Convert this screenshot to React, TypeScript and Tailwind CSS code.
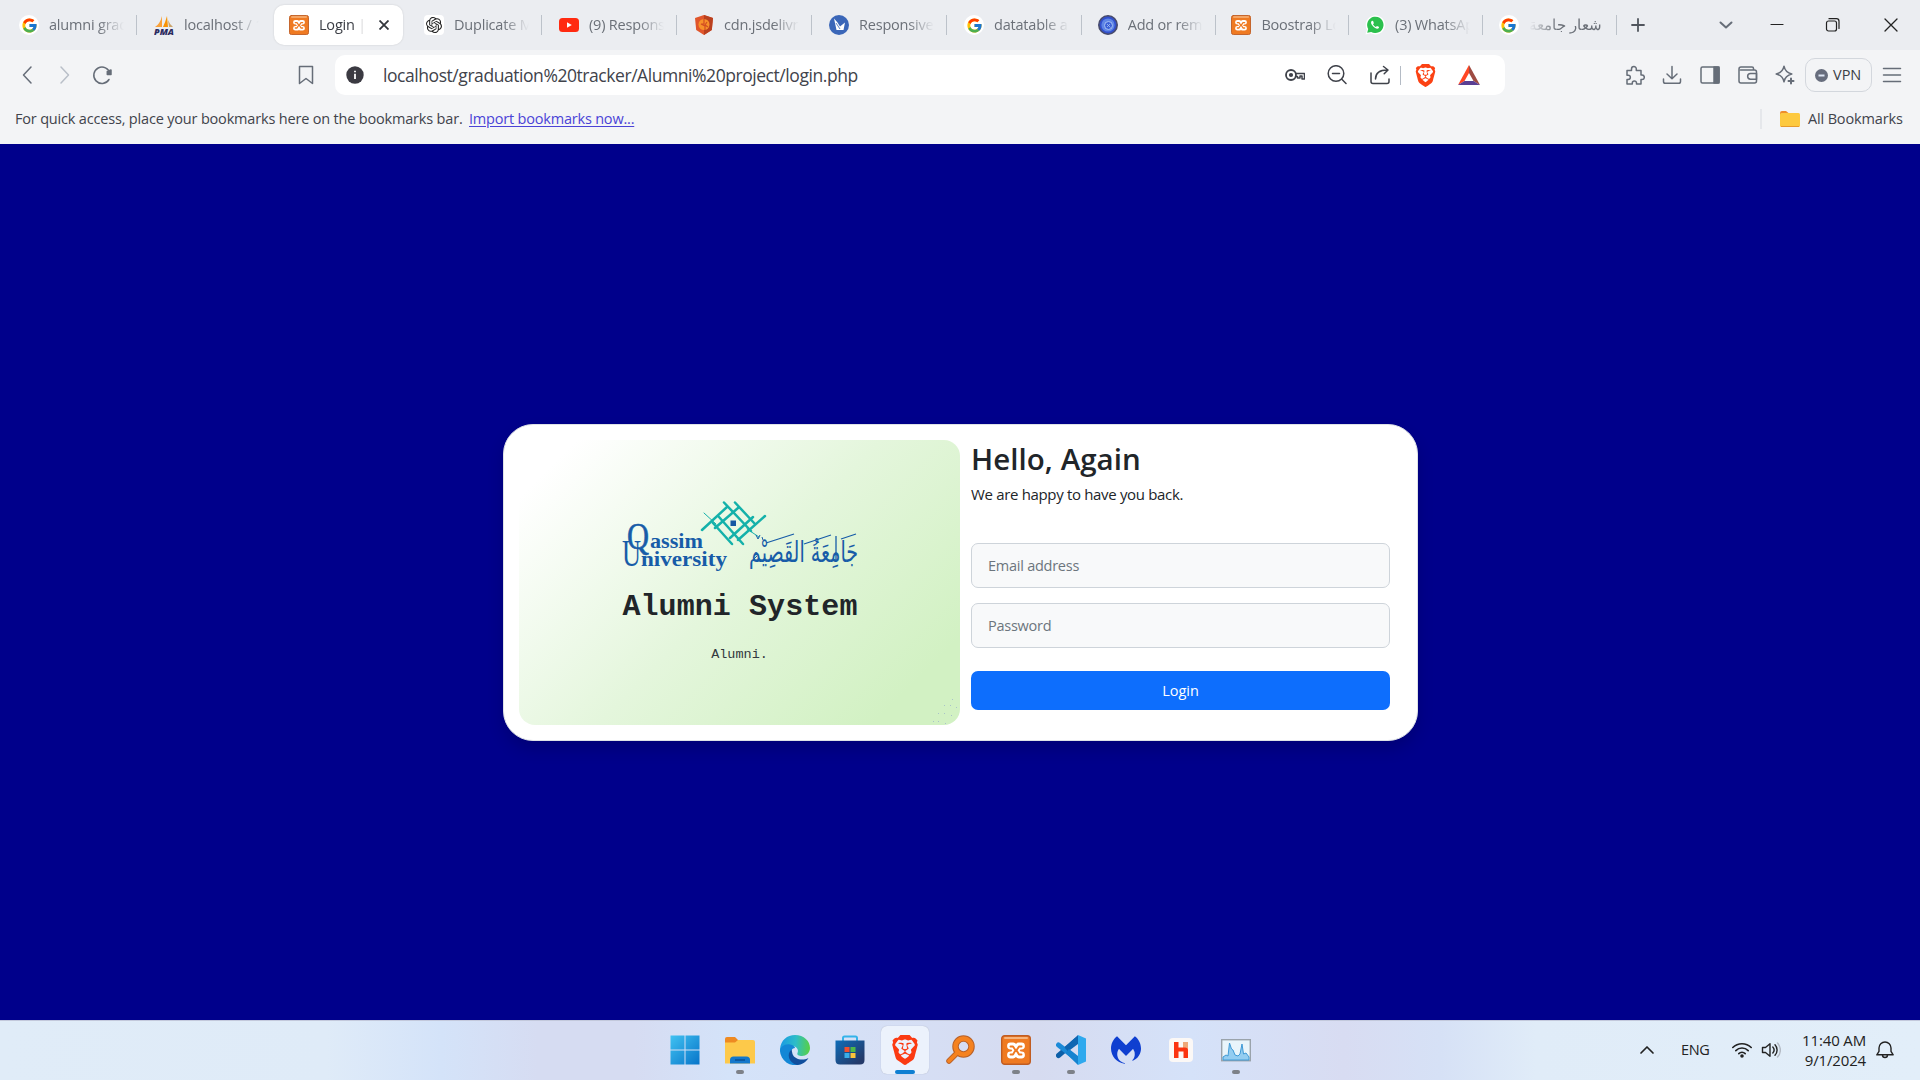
import React from "react";
import { FcGoogle } from "react-icons/fc";
import { SiBrave, SiMalwarebytes, SiOpenai } from "react-icons/si";

const ui = "font-['Open_Sans','Noto_Sans',sans-serif]";

const GoogleIcon = () => (
  <span className="flex size-5 items-center justify-center rounded-full bg-white">
    <FcGoogle className="size-[17px]" />
  </span>
);

const PmaIcon = () => (
  <svg viewBox="0 0 20 20" className="size-5">
    <path d="M8 1 L8 12 L1 12 Q6 9 8 1Z" fill="#f9a13a" />
    <path d="M13 1 L14 12 L9 12 Q11 8 13 1Z" fill="#f89406" />
    <path d="M14 5 Q16 10 19 12 L15 12Z" fill="#c9a46c" />
    <text x="0" y="19.500" fontSize="8" fontWeight="800" fontStyle="italic" fill="#2b2b60" textLength="20" lengthAdjust="spacingAndGlyphs" fontFamily="Open Sans">PMA</text>
  </svg>
);

const XamppIcon = ({ className = "size-5" }: { className?: string }) => (
  <svg viewBox="0 0 30 30" className={className} fill="none" strokeLinecap="round" strokeLinejoin="round">
    <rect x="0.7" y="0.7" width="28.600" height="28.600" rx="3" fill="#ef7a22" stroke="#c05c22" strokeWidth="1.400" />
    <rect x="3" y="2" width="24" height="2" rx="1" fill="#f6b47c" />
    <path d="M9.500 11h2.800l2.700 4-2.700 5H9.500M20.500 11h-2.800L15 15l2.700 5h2.800" stroke="#fff" strokeWidth="6.800" />
    <path d="M9.500 11.500h2.500l2.500 3.800-2.500 4.200H9.500M20.500 11.500H18l-2.500 3.800 2.500 4.200h2.500" stroke="#ef7a22" strokeWidth="1.900" />
  </svg>
);

const YoutubeIcon = () => (
  <svg viewBox="0 0 20 20" className="size-5">
    <rect y="3" width="20" height="14" rx="3.500" fill="#ff2a10" />
    <path d="M8 7.200v5.600l4.800-2.800z" fill="#fff" />
  </svg>
);

const ChatIcon = () => (
  <span className="flex size-5 items-center justify-center rounded bg-white">
    <SiOpenai className="size-4 text-[#222]" />
  </span>
);

const CdnIcon = () => (
  <svg viewBox="0 0 20 20" className="size-5">
    <path d="M10 0l9 3-1.200 12L10 20l-7.800-5L1 3z" fill="#e0552b" />
    <path d="M10 0l9 3-1.200 12L10 20z" fill="#b9401f" />
    <circle cx="10" cy="9.500" r="5.500" fill="#f7912a" />
    <path d="M10 4v5H7l4 2v4M13 7l-2 3 3 2" stroke="#d24d22" fill="none" strokeWidth="1.200" />
  </svg>
);

const ResponsiveIcon = () => (
  <svg viewBox="0 0 20 20" className="size-5">
    <circle cx="10" cy="10" r="10" fill="#3a66b8" />
    <path d="M5 3.500l3.500 4 2.500 4L16 7.500l-1.500 7.500H7.500z" fill="#fff" />
    <path d="M7 8l4 6" stroke="#3a66b8" strokeWidth="0.800" />
  </svg>
);

const GlobeIcon = () => (
  <svg viewBox="0 0 20 20" className="size-5">
    <circle cx="10" cy="10" r="9.200" fill="#3250cc" stroke="#474a6b" strokeWidth="1.600" />
    <circle cx="10" cy="10" r="6.600" fill="#5f86e6" />
    <circle cx="10.500" cy="10.500" r="4" fill="#3c62d8" stroke="#a9c2f4" />
    <path d="M9 9l3.500 3.500M12 9l-3 3" stroke="#a9c2f4" strokeWidth="0.800" />
  </svg>
);

const WhatsIcon = () => (
  <svg viewBox="0 0 20 20" className="size-5">
    <path d="M.5 19.500l1.400-5A9.600 9.600 0 1 1 5.700 18.300z" fill="#fff" />
    <path d="M2.200 17.800l1-3.800A8.200 8.200 0 1 1 6.200 17z" fill="#2bc04d" />
    <path d="M7 5.700c-1.600 1-1.300 3.200 1 5.600s4.700 3.300 6 1.500l-.2-1-1.900-.9-1 1.100c-1.400-.5-2.400-1.500-2.900-2.700l.9-1-.8-2.200z" fill="#fff" />
  </svg>
);

type TabData = { icon: React.ReactNode; title: string; sep: boolean; active?: boolean; wide?: boolean; rtl?: boolean };

const tabs: TabData[] = [
  { icon: <GoogleIcon />, title: "alumni grad", sep: true, wide: true },
  { icon: <PmaIcon />, title: "localhost / 1", sep: false, wide: true },
  { icon: <XamppIcon />, title: "Login | P", sep: false, active: true, wide: true },
  { icon: <ChatIcon />, title: "Duplicate Ma", sep: true, wide: true },
  { icon: <YoutubeIcon />, title: "(9) Responsi", sep: true, wide: true },
  { icon: <CdnIcon />, title: "cdn.jsdelivr.", sep: true, wide: true },
  { icon: <ResponsiveIcon />, title: "Responsive l", sep: true, wide: true },
  { icon: <GoogleIcon />, title: "datatable ar", sep: true },
  { icon: <GlobeIcon />, title: "Add or remo", sep: true },
  { icon: <XamppIcon />, title: "Boostrap Lo", sep: true },
  { icon: <WhatsIcon />, title: "(3) WhatsAp", sep: true },
  { icon: <GoogleIcon />, title: "شعار جامعة", sep: true, rtl: true },
];

const Tab = ({ t }: { t: TabData }) => (
  <div className={`flex h-10 shrink-0 items-center ${t.wide ? "w-[135px]" : "w-[133.700px]"}`}>
    <div className={`flex h-10 w-[129px] shrink-0 items-center rounded-[10px] pl-[15px] ${t.active ? "bg-white shadow-[0_0_2px_rgba(0,0,0,0.15)]" : ""}`}>
      {t.icon}
      <div
        dir={t.rtl ? "rtl" : "ltr"}
        className={`ml-[10px] overflow-hidden whitespace-nowrap text-[14.5px] tracking-[-0.2px] ${
          t.active
            ? "w-[45px] text-[#3b3e45] [mask-image:linear-gradient(to_right,black_80%,transparent)]"
            : t.rtl
              ? "w-[73px] text-[#6b7078] [mask-image:linear-gradient(to_left,black_60%,transparent)]"
              : "w-[75px] text-[#6b7078] [mask-image:linear-gradient(to_right,black_65%,transparent)]"
        }`}
      >
        {t.title}
      </div>
      {t.active && (
        <svg viewBox="0 0 10 10" className="ml-[15px] size-[10px]" stroke="#33363c" strokeWidth="1.800">
          <path d="M.5.5l9 9M9.500.5l-9 9" />
        </svg>
      )}
    </div>
    {t.sep && <div className="ml-[3px] h-5 w-px bg-[#bcc2ca]" />}
  </div>
);

const Ic = ({ children, w = 20, className = "", c = "#666d78", sw = 1.5 }: { children: React.ReactNode; w?: number; className?: string; c?: string; sw?: number }) => (
  <svg viewBox={`0 0 ${w} 20`} width={w} height={20} fill="none" stroke={c} strokeWidth={sw} strokeLinecap="round" strokeLinejoin="round" className={`shrink-0 ${className}`}>
    {children}
  </svg>
);

const TabStrip = () => (
  <div className="flex h-[50px] shrink-0 items-center bg-[#ebedf1] pl-1">
    {tabs.map((t, i) => (
      <Tab key={i} t={t} />
    ))}
    <Ic c="#50555d" sw={1.8} className="ml-[11px]">
      <path d="M10 4v12M4 10h12" />
    </Ic>
    <Ic c="#666d78" sw={2} className="ml-[68px]">
      <path d="M4.500 7.500l5.500 5 5.500-5" />
    </Ic>
    <Ic c="#222" sw={1.2} className="ml-[31px]">
      <path d="M4 9.500h12" />
    </Ic>
    <Ic c="#222" sw={1.2} className="ml-[36px]">
      <rect x="3.500" y="6" width="10" height="10" rx="2" />
      <path d="M6 3.700h7.500q2.500 0 2.500 2.500v7.300" />
    </Ic>
    <Ic c="#222" sw={1.3} className="ml-[38px]">
      <path d="M4 4l12 12M16 4L4 16" />
    </Ic>
  </div>
);

const Toolbar = () => (
  <div className="flex h-[50px] shrink-0 items-center">
    <Ic className="ml-[17px]">
      <path d="M14 2L6.500 10l7.500 8" />
    </Ic>
    <Ic c="#b9bfc8" className="ml-[17px]">
      <path d="M7 2l7.500 8L7 18" />
    </Ic>
    <Ic className="ml-[18px]">
      <path d="M18 8.500A8.200 8.200 0 1 0 17 14.500" />
      <path d="M15.300 6.500l3.700-1.500v4.500h-3.700z" fill="#666d78" />
    </Ic>
    <Ic className="ml-[184px]">
      <path d="M3.500 1.500h13v17L10 13.500l-6.500 5z" strokeWidth="1.500" />
    </Ic>
    <div className="ml-[19px] flex h-10 w-[1170px] items-center rounded-[10px] bg-white">
      <svg viewBox="0 0 18 18" className="ml-[11px] size-[18px]">
        <circle cx="9" cy="9" r="8.700" fill="#3b3a42" />
        <path d="M9 7.700v5.300M9 4.700v1.500" stroke="#fff" strokeWidth="1.800" />
      </svg>
      <div className="ml-[19px] w-[880px] whitespace-nowrap text-[17.5px] tracking-[-0.44px] text-[#41434b]">localhost/graduation%20tracker/Alumni%20project/login.php</div>
      <Ic c="#3f424a" sw={1.8} className="ml-[22px]">
        <circle cx="6" cy="10" r="5" />
        <circle cx="6" cy="10" r="1.200" fill="#3f424a" />
        <path d="M11 8.500h8.500v5.500h-2.500v-3h-2v2h-2.500v-1.500h-2" strokeWidth="1.500" />
      </Ic>
      <Ic c="#3f424a" className="ml-[22px]">
        <circle cx="9" cy="8.500" r="7.800" />
        <path d="M5.500 8.500h7M14.800 14.300l4.200 4.200" />
      </Ic>
      <Ic c="#3f424a" className="ml-[23px]">
        <path d="M1 8v8.500q0 2 2 2h14q2 0 2-2V14" />
        <path d="M5.500 14c0-6 4-9 12-9M13.500 1.500L18 5l-3.800 3.800" />
      </Ic>
      <div className="ml-[10px] h-[19px] w-px bg-[#b4bbc5]" />
      <SiBrave className="ml-[13px] size-[23px] text-[#fb4214]" />
      <svg viewBox="0 0 22 20" className="ml-[21px] h-5 w-[22px]">
        <path d="M11 0L0 20l6.500-4L11 8z" fill="#ff4724" />
        <path d="M11 0l11 20-6.500-4L11 8z" fill="#9e4b42" />
        <path d="M0 20h22l-6.500-4h-9z" fill="#5a3f93" />
      </svg>
    </div>
    <Ic className="ml-[120px]">
      <path d="M2 5.500h4.500V4a2.400 2.400 0 0 1 4.800 0v1.500H16V10h1a2.300 2.300 0 0 1 0 4.600h-1V19h-4.500v-1a2.100 2.100 0 0 0-4.200 0v1H2v-4.500h1.200a2.100 2.100 0 0 0 0-4.300H2z" />
    </Ic>
    <Ic className="ml-[17px]">
      <path d="M10 1.500v12M5 9l5 4.800L15 9M1.500 14v2.500q0 1.800 1.800 1.800h13.400q1.800 0 1.800-1.800V14" />
    </Ic>
    <Ic className="ml-[18px]">
      <rect x="1" y="2" width="18" height="16" rx="1.500" />
      <path d="M14 2h5v16h-5z" fill="#666d78" />
    </Ic>
    <Ic className="ml-[18px]">
      <path d="M15.500 5V3.500Q15.500 2 14 2H3Q1 2 1 4v12q0 2 2 2h13.500q2 0 2-2V7q0-2-2-2H2.500" />
      <path d="M18.500 8.500h-6a2.800 2.800 0 0 0 0 5.700h6z" />
    </Ic>
    <Ic className="ml-[17px]">
      <path d="M9 1.200q1.200 6.300 7.800 7.800-6.600 1.500-7.800 7.800-1.200-6.300-7.800-7.800Q7.800 7.500 9 1.200z" />
      <path d="M16 13.500v5M13.500 16h5" strokeWidth="2" />
    </Ic>
    <div className="ml-[10px] flex h-[34px] w-[67px] items-center rounded-[10px] border border-[#d3d7dd] pl-[9px] text-[14.5px] text-[#3b3e45]">
      <svg viewBox="0 0 13 13" className="mr-[5px] size-[13px] shrink-0">
        <circle cx="6.500" cy="6.500" r="6.500" fill="#676d7d" />
        <path d="M3.500 6.500h6" stroke="#dfe6f5" strokeWidth="2" />
      </svg>
      VPN
    </div>
    <Ic className="ml-[10px]">
      <path d="M1.500 3.500h17M1.500 10h17M1.500 16.500h17" />
    </Ic>
  </div>
);

const Folder = () => (
  <svg viewBox="0 0 20 16" className="h-4 w-5">
    <path d="M0 2Q0 0 2 0h4l2.500 2H18v3H0z" fill="#ee8d2a" />
    <rect y="2" width="20" height="14" rx="1.500" fill="#fdc93f" />
    <path d="M1 15.500h18" stroke="#e79a2c" />
  </svg>
);

const BookmarksBar = () => (
  <div className="flex h-11 shrink-0 items-center whitespace-nowrap pb-[6px] pl-[15px] pr-[17px] text-[14.5px] text-[#41434b]">
    <span className="w-[454px] tracking-[-0.18px]">For quick access, place your bookmarks here on the bookmarks bar.</span>
    <span className="tracking-[-0.2px] text-[#4a43d6] underline underline-offset-2">Import bookmarks now...</span>
    <div className="ml-auto mr-[18px] h-5 w-[2px] bg-[#e5e7eb]" />
    <Folder />
    <span className="ml-2 w-[95px] tracking-[-0.15px]">All Bookmarks</span>
  </div>
);

const UniversityLogo = () => (
  <svg viewBox="0 0 236 72" className="h-[72px] w-[236px]">
    <g stroke="#14b1aa" strokeWidth="2.500" strokeLinecap="round">
      <path d="M80 30l25-23M93 28l23-20M108 38l23-21M116 40l27-24" />
      <path d="M102 2.500l27 28.500M113 2.500l20 21.500M91 23l19 21M97 17l24 27" />
      <path d="M82 13l12 11M125 29l12 8" strokeWidth="1" />
    </g>
    <rect x="108.500" y="20.500" width="5.500" height="5.500" fill="#1557a3" />
    <g fill="#175ca8" fontFamily="Liberation Serif" fontWeight="700">
      <text x="5" y="49" fontSize="38" fontWeight="400" stroke="#175ca8" strokeWidth="0.600" textLength="22" lengthAdjust="spacingAndGlyphs">Q</text>
      <text x="28" y="48" fontSize="21" textLength="53" lengthAdjust="spacingAndGlyphs">assim</text>
      <text x="0" y="66" fontSize="38" fontWeight="400" textLength="19" lengthAdjust="spacingAndGlyphs">U</text>
      <text x="19" y="66" fontSize="21" textLength="86" lengthAdjust="spacingAndGlyphs">niversity</text>
    </g>
    <text x="236" y="62" direction="rtl" fontSize="29" fill="#175ca8" fontFamily="DejaVu Sans" textLength="109" lengthAdjust="spacingAndGlyphs">جَامِعَةُ القَصِيْم</text>
    <path d="M144 43l28-9M182 44l27-9M219 39l15-5M214 36v24" stroke="#175ca8" strokeWidth="1.300" />
    <path d="M134 35l2 4 2-4M140 37l1 3M129 62l6-6" stroke="#175ca8" fill="none" />
  </svg>
);

const dots = [
  [20, 2], [12, 8], [18, 8], [24, 10], [6, 16], [12, 16], [19, 18], [1, 24], [6, 24], [13, 26],
];

const LoginCard = () => (
  <div className="flex h-[317px] w-[915px] rounded-[30px] border border-[#dee2e6] bg-white p-[15px] shadow-[0_8px_16px_rgba(0,0,0,0.15)]">
    <div className="relative flex h-[285px] w-[441px] shrink-0 flex-col items-center rounded-2xl bg-[linear-gradient(135deg,#ffffff_0%,#ffffff_8%,#e4f6dc_50%,#d2f1c3_88%,#d2f1c3_100%)] pt-[60px]">
      <UniversityLogo />
      <div className="mt-[17px] whitespace-pre pl-px font-['Liberation_Mono',monospace] text-[30px] font-bold leading-9 tracking-[0.08px] text-[#212529]">Alumni System</div>
      <div className="mt-[20px] font-['Liberation_Mono',monospace] text-[13.5px] leading-5 text-[#33393f]">Alumni.</div>
      <svg viewBox="0 0 28 28" className="absolute bottom-0 right-0 size-7">
        {dots.map(([x, y]) => (
          <rect key={`${x}-${y}`} x={x} y={y} width="1" height="1" fill="#a9c3c9" />
        ))}
      </svg>
    </div>
    <div className="ml-[11px] flex w-[419px] shrink-0 flex-col text-[#212529]">
      <div className="h-[38px] text-[29.5px] font-semibold leading-[38px] tracking-[0.05px]">Hello, Again</div>
      <div className="mt-1 text-[15px] leading-6 tracking-[-0.33px]">We are happy to have you back.</div>
      <div className="mt-[37px] flex h-[45px] items-center rounded-[7px] border border-[#ced4da] bg-[#f8f9fa] pl-4 pt-px text-[14.5px] tracking-[-0.25px] text-[#6c757d]">Email address</div>
      <div className="mt-[15px] flex h-[45px] items-center rounded-[7px] border border-[#ced4da] bg-[#f8f9fa] pl-4 pt-px text-[14.5px] tracking-[-0.25px] text-[#6c757d]">Password</div>
      <div className="mt-[23px] flex h-[39px] items-center justify-center rounded-[7px] bg-[#0d6efd] text-[14.5px] text-white">Login</div>
    </div>
  </div>
);

const WindowsIcon = () => (
  <svg viewBox="0 0 30 30" className="size-[30px]">
    <defs>
      <linearGradient id="win" x1="0" y1="0" x2="30" y2="30" gradientUnits="userSpaceOnUse">
        <stop stopColor="#42c3f2" />
        <stop offset="1" stopColor="#0673c8" />
      </linearGradient>
    </defs>
    <path d="M.5.5h14v14h-14zM15.500.5h14v14h-14zM.5 15.500h14v14h-14zM15.500 15.500h14v14h-14z" fill="url(#win)" />
  </svg>
);

const ExplorerIcon = () => (
  <svg viewBox="0 0 30 30" className="size-[30px]">
    <path d="M0 4q0-2 2-2h8l3 3v5H0z" fill="#ee8a22" />
    <path d="M0 7.500h10L13 5h15q2 0 2 2v21.500H0z" fill="#fdc94a" />
    <path d="M5 28.500V25q0-3.500 3.500-3.500h13q3.500 0 3.500 3.500v3.500z" fill="#1478cc" />
    <path d="M10 25h10" stroke="#0a4f94" strokeWidth="1.500" />
  </svg>
);

const EdgeIcon = () => (
  <svg viewBox="0 0 30 30" className="size-[30px]">
    <defs>
      <linearGradient id="edgeTop" x1="2" y1="10" x2="29" y2="12" gradientUnits="userSpaceOnUse">
        <stop stopColor="#1c9ee0" />
        <stop offset=".5" stopColor="#2dbdc8" />
        <stop offset="1" stopColor="#55cf4c" />
      </linearGradient>
    </defs>
    <path d="M0 14C1 5 7 0 15 0c9 0 15 6 15 13 0 5-4 8-8 8-3 0-5.500-1-4.500-3 1.500-3-.5-7-5.500-7C6 11 0 14 0 19z" fill="url(#edgeTop)" />
    <path d="M0 16c0-4 5-7.500 10-6.500 3 .5 5 2.500 5 3.500-3 0-4 3-4 5 0 5 3 10 9 11.300A15 15 0 0 1 0 16z" fill="#1387d6" />
    <path d="M11.500 14.500C6 19 9 28 17 30c5 0 9-3 11.500-7-6 3-14 1.500-16-4-.5-1.500-.5-3-1-4.500z" fill="#114f9d" />
  </svg>
);

const StoreIcon = () => (
  <svg viewBox="0 0 30 30" className="size-[30px]">
    <defs>
      <linearGradient id="store" x1="0" y1="6" x2="20" y2="30" gradientUnits="userSpaceOnUse">
        <stop stopColor="#0f6db8" />
        <stop offset="1" stopColor="#243a6a" />
      </linearGradient>
    </defs>
    <path d="M8 6V3q0-1.500 1.500-1.500h11Q22 1.500 22 3v3" fill="none" stroke="#35b3ea" strokeWidth="2" />
    <path d="M.5 5.500h29V25q0 4.500-4.500 4.500H5Q.5 29.500.5 25z" fill="url(#store)" />
    <path d="M9.500 12h5v5h-5z" fill="#f1502f" />
    <path d="M15.500 12h5v5h-5z" fill="#4fb848" />
    <path d="M9.500 18h5v5h-5z" fill="#39aee8" />
    <path d="M15.500 18h5v5h-5z" fill="#fbc43a" />
  </svg>
);

const SearchIcon = () => (
  <svg viewBox="0 0 30 30" className="size-[30px]">
    <circle cx="18.500" cy="11.500" r="8" fill="none" stroke="#b9622a" strokeWidth="6.500" />
    <path d="M12 18l-8 8" stroke="#b9622a" strokeWidth="5.500" strokeLinecap="round" />
    <circle cx="18.500" cy="11.500" r="8" fill="none" stroke="#f58220" strokeWidth="4.500" />
    <path d="M12 18l-8 8" stroke="#f58220" strokeWidth="3.800" strokeLinecap="round" />
  </svg>
);

const HIcon = () => (
  <svg viewBox="0 0 24 24" className="size-6">
    <rect width="24" height="24" rx="4" fill="#fbf8f6" />
    <path d="M14 4h5v9h-5z" fill="#efa878" />
    <path d="M5 4h4.500v5.500H16q3 0 3 3V20h-4.500v-6.500h-5V20H5z" fill="#fb3410" />
  </svg>
);

const MonitorIcon = () => (
  <svg viewBox="0 0 30 30" className="size-[30px]">
    <rect x=".7" y="4.700" width="28.600" height="21" fill="#e9f5fb" stroke="#9aa3ab" strokeWidth="1.400" />
    <path d="M2 22l3-2 2 1L8.500 8l2 6 1.500 1 2 5 3 1 2-2 2-10 1.500 10 2.500-1 3 4v3H2z" fill="#93cdf1" stroke="#3f9ad6" strokeWidth="1" />
  </svg>
);

const CodeIcon = () => (
  <svg viewBox="0 0 30 30" className="size-[30px]">
    <path d="M2.500 20.500L20 5.500" stroke="#0c5fa8" strokeWidth="5" strokeLinecap="round" />
    <path d="M2.500 10L22 25" stroke="#1b8ad8" strokeWidth="5" strokeLinecap="round" />
    <path d="M22 0l8 3.500v23L22 30z" fill="#2fa9ee" />
    <path d="M22 0v9L12 16.500l-3.500-4z" fill="#0f66b2" />
    <path d="M22 30v-9l-9-7-3.500 4z" fill="#1583d0" />
  </svg>
);

type TaskbarApp = { icon: React.ReactNode; run?: boolean; active?: boolean };
const apps: TaskbarApp[] = [
  { icon: <WindowsIcon /> },
  { icon: <ExplorerIcon />, run: true },
  { icon: <EdgeIcon /> },
  { icon: <StoreIcon /> },
  { icon: <SiBrave className="size-[30px] text-[#fb3a12]" />, active: true },
  { icon: <SearchIcon /> },
  { icon: <XamppIcon className="size-[30px]" />, run: true },
  { icon: <CodeIcon />, run: true },
  { icon: <SiMalwarebytes className="size-[30px] text-[#0f3fd0]" /> },
  { icon: <HIcon /> },
  { icon: <MonitorIcon />, run: true },
];

const Taskbar = () => (
  <div className="flex h-[60px] shrink-0 items-center border-t border-[#c3c9dc] bg-[linear-gradient(90deg,#e0ecf8_0%,#dfebf8_17%,#d4e3f9_23%,#d6dcf2_28%,#d6dcf2_33%,#d4e3f9_38%,#d6dff5_47%,#d6dbf0_54%,#d5e2f9_62%,#d8dcf2_70%,#d6e1f6_75%,#e0ecf8_80%,#e2eef9_100%)] pb-px">
    <div className="ml-[658px] flex w-[606px] gap-[1.1px]">
      {apps.map((a, i) => (
        <div key={i} className="flex w-[54px] shrink-0 justify-center">
          <div className={`relative flex h-12 w-12 items-center justify-center rounded-md pb-[1px] ${a.active ? "bg-[#ecf2fc] shadow-[0_0_1px_rgba(0,0,0,0.25)]" : ""}`}>
            {a.icon}
            {a.run && <div className="absolute bottom-0 left-5 h-1 w-2 rounded-full bg-[#7d8188]" />}
            {a.active && <div className="absolute bottom-0 left-[14px] h-1 w-5 rounded-full bg-[#0f7fd2]" />}
          </div>
        </div>
      ))}
    </div>
    <Ic c="#222" sw={1.700} className="ml-[373px]">
      <path d="M4 13l6-6 6 6" />
    </Ic>
    <span className="ml-6 w-[30px] text-[14.5px] tracking-[-0.3px] text-[#222]">ENG</span>
    <Ic c="#222" sw={1.600} className="ml-[21px]">
      <path d="M.8 7.500a13 13 0 0 1 18.400 0M3.800 10.600a8.800 8.800 0 0 1 12.400 0M6.800 13.600a4.600 4.600 0 0 1 6.400 0" />
      <circle cx="10" cy="16" r="1" fill="#222" />
    </Ic>
    <Ic c="#222" sw={1.400} className="ml-[9px]">
      <path d="M1.500 7.500h3L9 3.800v12.400l-4.500-3.700h-3zM11.800 7a4.500 4.500 0 0 1 0 6M14 4.800a7.500 7.500 0 0 1 0 10.400" />
      <path d="M16.500 3a10 10 0 0 1 0 14" stroke="#b3bac4" />
    </Ic>
    <div className="ml-[10px] flex w-[75px] flex-col items-end whitespace-nowrap text-[15px] leading-5 tracking-[-0.15px] text-[#222]">
      <span>11:40 AM</span>
      <span>9/1/2024</span>
    </div>
    <Ic c="#222" sw={1.400} className="ml-[9px]">
      <path d="M1.800 14.800h16.400l-2.200-3.500V8a6 6 0 0 0-12 0v3.300zM7.500 15a2.500 2.500 0 0 0 5 0" />
    </Ic>
  </div>
);

export default function App() {
  return (
    <div className={`flex h-[1080px] w-[1920px] flex-col overflow-hidden bg-[#00008b] ${ui}`}>
      <TabStrip />
      <div className="flex h-[94px] shrink-0 flex-col bg-[#f3f4f6]">
        <Toolbar />
        <BookmarksBar />
      </div>
      <div className="flex flex-1 items-center justify-center pl-px pt-px">
        <LoginCard />
      </div>
      <Taskbar />
    </div>
  );
}
